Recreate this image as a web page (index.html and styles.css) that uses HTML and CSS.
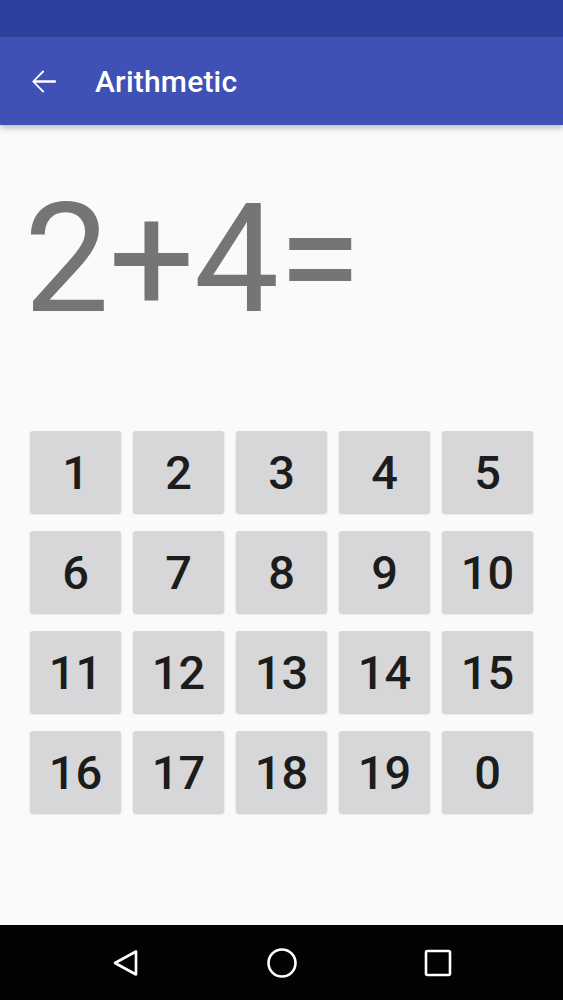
FILE: index.html
```html
<!DOCTYPE html>
<html lang="en">
<head>
  <meta charset="UTF-8">
  <title>Arithmetic</title>
  <link rel="stylesheet" href="styles.css">
</head>
<body>
  <div class="screen">
    <div class="status-bar"></div>
    <div class="toolbar">
      <svg class="back-arrow" width="37" height="37" viewBox="0 0 24 24">
        <path d="M20 11.2H6.9l5.6-5.6-.85-.85L4.6 12l7.05 7.25.85-.85-5.6-5.6H20z" fill="#fff"/>
      </svg>
      <h1 class="title">Arithmetic</h1>
    </div>

    <div class="content">
      <div class="question">2+4=</div>
      <div class="keypad">
        <button class="key">1</button>
        <button class="key">2</button>
        <button class="key">3</button>
        <button class="key">4</button>
        <button class="key">5</button>
        <button class="key">6</button>
        <button class="key">7</button>
        <button class="key">8</button>
        <button class="key">9</button>
        <button class="key">10</button>
        <button class="key">11</button>
        <button class="key">12</button>
        <button class="key">13</button>
        <button class="key">14</button>
        <button class="key">15</button>
        <button class="key">16</button>
        <button class="key">17</button>
        <button class="key">18</button>
        <button class="key">19</button>
        <button class="key">0</button>
      </div>
    </div>

    <div class="nav-bar">
      <div class="nav-slot">
        <svg width="30" height="30" viewBox="0 0 30 30">
          <path d="M25 3.5 L4 15 L25 26.5 Z" fill="none" stroke="#fff" stroke-width="2.6" stroke-linejoin="round"/>
        </svg>
      </div>
      <div class="nav-slot">
        <svg width="32" height="32" viewBox="0 0 32 32">
          <circle cx="16" cy="16" r="13.5" fill="none" stroke="#fff" stroke-width="2.6"/>
        </svg>
      </div>
      <div class="nav-slot">
        <svg width="28" height="28" viewBox="0 0 28 28">
          <rect x="2" y="2" width="24" height="24" rx="1.5" fill="none" stroke="#fff" stroke-width="2.6"/>
        </svg>
      </div>
    </div>
  </div>
</body>
</html>
```

FILE: styles.css
```css
body {
  margin: 0;
  font-family: Roboto, 'Noto Sans', sans-serif;
  background: #000;
}

.screen {
  width: 563px;
  height: 1000px;
  display: flex;
  flex-direction: column;
  background: #fbfafb;
  overflow: hidden;
}

.status-bar {
  height: 37px;
  background: #2f3f9f;
  flex-shrink: 0;
}

.toolbar {
  height: 88px;
  flex-shrink: 0;
  background: #3f51b5;
  display: flex;
  align-items: center;
  padding-left: 25px;
  box-shadow: 0 3px 6px rgba(0,0,0,0.25);
  position: relative;
  z-index: 1;
}

.back-arrow {
  display: block;
}

.title {
  margin: 0 0 0 33px;
  color: #fff;
  font-size: 30px;
  font-weight: 500;
  letter-spacing: 0.2px;
}

.content {
  flex: 1;
  padding: 0 30px;
}

.question {
  font-size: 152px;
  line-height: 1;
  color: #757477;
  margin-top: 58px;
  margin-left: -6px;
  letter-spacing: -1px;
}

.keypad {
  display: grid;
  grid-template-columns: repeat(5, 91px);
  grid-auto-rows: 82px;
  column-gap: 12px;
  row-gap: 18px;
  margin-top: 96px;
}

.key {
  border: none;
  border-radius: 3px;
  background: #d7d7d9;
  box-shadow: 0 1px 2px rgba(0,0,0,0.2);
  font-family: Roboto, sans-serif;
  font-size: 47px;
  font-weight: 500;
  color: #1c1c1c;
  padding: 0;
}

.nav-bar {
  height: 75px;
  flex-shrink: 0;
  background: #030303;
  display: flex;
  align-items: center;
  justify-content: center;
}

.nav-slot {
  width: 156px;
  display: flex;
  justify-content: center;
}

.nav-slot svg {
  display: block;
}
```
